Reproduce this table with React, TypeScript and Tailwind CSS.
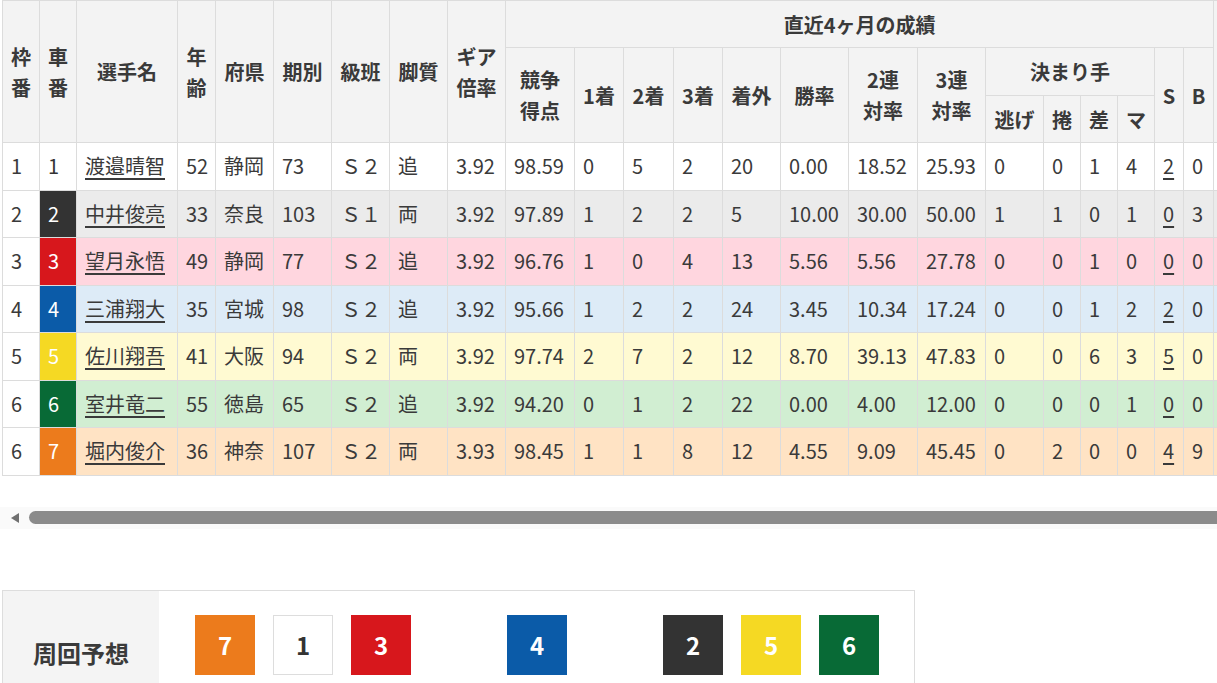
import React from "react";

type Row = {
  waku: number;
  car: number;
  name: string;
  age: number;
  pref: string;
  ki: number;
  cls: string;
  leg: string;
  gear: string;
  score: string;
  f1: number;
  f2: number;
  f3: number;
  out: number;
  win: string;
  r2: string;
  r3: string;
  nige: number;
  makuri: number;
  sashi: number;
  ma: number;
  s: number;
  b: number;
};

const rows: Row[] = [
  { waku: 1, car: 1, name: "渡邉晴智", age: 52, pref: "静岡", ki: 73, cls: "Ｓ２", leg: "追", gear: "3.92", score: "98.59", f1: 0, f2: 5, f3: 2, out: 20, win: "0.00", r2: "18.52", r3: "25.93", nige: 0, makuri: 0, sashi: 1, ma: 4, s: 2, b: 0 },
  { waku: 2, car: 2, name: "中井俊亮", age: 33, pref: "奈良", ki: 103, cls: "Ｓ１", leg: "両", gear: "3.92", score: "97.89", f1: 1, f2: 2, f3: 2, out: 5, win: "10.00", r2: "30.00", r3: "50.00", nige: 1, makuri: 1, sashi: 0, ma: 1, s: 0, b: 3 },
  { waku: 3, car: 3, name: "望月永悟", age: 49, pref: "静岡", ki: 77, cls: "Ｓ２", leg: "追", gear: "3.92", score: "96.76", f1: 1, f2: 0, f3: 4, out: 13, win: "5.56", r2: "5.56", r3: "27.78", nige: 0, makuri: 0, sashi: 1, ma: 0, s: 0, b: 0 },
  { waku: 4, car: 4, name: "三浦翔大", age: 35, pref: "宮城", ki: 98, cls: "Ｓ２", leg: "追", gear: "3.92", score: "95.66", f1: 1, f2: 2, f3: 2, out: 24, win: "3.45", r2: "10.34", r3: "17.24", nige: 0, makuri: 0, sashi: 1, ma: 2, s: 2, b: 0 },
  { waku: 5, car: 5, name: "佐川翔吾", age: 41, pref: "大阪", ki: 94, cls: "Ｓ２", leg: "両", gear: "3.92", score: "97.74", f1: 2, f2: 7, f3: 2, out: 12, win: "8.70", r2: "39.13", r3: "47.83", nige: 0, makuri: 0, sashi: 6, ma: 3, s: 5, b: 0 },
  { waku: 6, car: 6, name: "室井竜二", age: 55, pref: "徳島", ki: 65, cls: "Ｓ２", leg: "追", gear: "3.92", score: "94.20", f1: 0, f2: 1, f3: 2, out: 22, win: "0.00", r2: "4.00", r3: "12.00", nige: 0, makuri: 0, sashi: 0, ma: 1, s: 0, b: 0 },
  { waku: 6, car: 7, name: "堀内俊介", age: 36, pref: "神奈", ki: 107, cls: "Ｓ２", leg: "両", gear: "3.93", score: "98.45", f1: 1, f2: 1, f3: 8, out: 12, win: "4.55", r2: "9.09", r3: "45.45", nige: 0, makuri: 2, sashi: 0, ma: 0, s: 4, b: 9 },
];

const rowBg: Record<number, string> = {
  1: "bg-white",
  2: "bg-[#ebebeb]",
  3: "bg-[#ffd6df]",
  4: "bg-[#ddebf7]",
  5: "bg-[#fffad2]",
  6: "bg-[#d1eed2]",
  7: "bg-[#ffe3c4]",
};

const carBg: Record<number, string> = {
  1: "bg-white text-[#333333]",
  2: "bg-[#333333] text-white",
  3: "bg-[#d7171c] text-white",
  4: "bg-[#0b5ba8] text-white",
  5: "bg-[#f5d923] text-white",
  6: "bg-[#086a36] text-white",
  7: "bg-[#ec7b1c] text-white",
};

const colWidths = [37, 37, 101, 38, 58, 58, 58, 58, 58, 69, 49, 50, 49, 58, 68, 69, 68, 58, 37, 37, 37, 29, 30, 60];

const th = "border border-[#dcdcdc] bg-[#f3f3f3] font-bold text-center align-middle p-0 leading-[31px]";
const td = "border border-[#dcdcdc] px-2 py-0 text-left align-middle whitespace-nowrap";

function Box({ n, cls }: { n: number; cls: string }) {
  return (
    <div className={`w-[60px] h-[60px] flex items-center justify-center text-[24px] font-bold ${cls}`}>{n}</div>
  );
}

export default function App() {
  return (
    <div
      className="w-[1217px] h-[683px] overflow-hidden bg-white text-[#3a3a3a] text-[20px] leading-[30px]"
      style={{ fontFamily: '"Noto Sans CJK JP", "Noto Sans", sans-serif' }}
    >
      <div className="overflow-hidden pl-[2px]">
        <table className="table-fixed border-collapse w-[1271px]">
          <colgroup>
            {colWidths.map((w, i) => (
              <col key={i} style={{ width: w }} />
            ))}
          </colgroup>
          <thead>
            <tr className="h-[47px]">
              <th rowSpan={3} className={th}>枠<br />番</th>
              <th rowSpan={3} className={th}>車<br />番</th>
              <th rowSpan={3} className={th}>選手名</th>
              <th rowSpan={3} className={th}>年<br />齢</th>
              <th rowSpan={3} className={th}>府県</th>
              <th rowSpan={3} className={th}>期別</th>
              <th rowSpan={3} className={th}>級班</th>
              <th rowSpan={3} className={th}>脚質</th>
              <th rowSpan={3} className={th}>ギア<br />倍率</th>
              <th colSpan={14} className={th}>直近4ヶ月の成績</th>
              <th rowSpan={3} className={th}></th>
            </tr>
            <tr className="h-[48px]">
              <th rowSpan={2} className={th}>競争<br />得点</th>
              <th rowSpan={2} className={th}>1着</th>
              <th rowSpan={2} className={th}>2着</th>
              <th rowSpan={2} className={th}>3着</th>
              <th rowSpan={2} className={th}>着外</th>
              <th rowSpan={2} className={th}>勝率</th>
              <th rowSpan={2} className={th}>2連<br />対率</th>
              <th rowSpan={2} className={th}>3連<br />対率</th>
              <th colSpan={4} className={th}>決まり手</th>
              <th rowSpan={2} className={th}>S</th>
              <th rowSpan={2} className={th}>B</th>
            </tr>
            <tr className="h-[47px]">
              <th className={th}>逃げ</th>
              <th className={th}>捲</th>
              <th className={th}>差</th>
              <th className={th}>マ</th>
            </tr>
          </thead>
          <tbody>
            {rows.map((r) => (
              <tr key={r.car} className={`h-[47.5px] ${rowBg[r.car]}`}>
                <td className={`${td} bg-white`}>{r.waku}</td>
                <td className={`${td} ${carBg[r.car]}`}>{r.car}</td>
                <td className={td}>
                  <span className="underline decoration-[1.5px] underline-offset-[4px]">{r.name}</span>
                </td>
                <td className={td}>{r.age}</td>
                <td className={td}>{r.pref}</td>
                <td className={td}>{r.ki}</td>
                <td className={`${td} pl-[9px]`}>{r.cls}</td>
                <td className={td}>{r.leg}</td>
                <td className={td}>{r.gear}</td>
                <td className={td}>{r.score}</td>
                <td className={td}>{r.f1}</td>
                <td className={td}>{r.f2}</td>
                <td className={td}>{r.f3}</td>
                <td className={td}>{r.out}</td>
                <td className={td}>{r.win}</td>
                <td className={td}>{r.r2}</td>
                <td className={td}>{r.r3}</td>
                <td className={td}>{r.nige}</td>
                <td className={td}>{r.makuri}</td>
                <td className={td}>{r.sashi}</td>
                <td className={td}>{r.ma}</td>
                <td className={td}>
                  <span className="underline decoration-[1.5px] underline-offset-[4px]">{r.s}</span>
                </td>
                <td className={td}>{r.b}</td>
                <td className={td}></td>
              </tr>
            ))}
          </tbody>
        </table>
      </div>

      {/* fake horizontal scrollbar */}
      <div className="mt-[31px] h-[22px] bg-[#fafafa] flex items-center">
        <div className="ml-[11px] w-0 h-0 border-y-[5px] border-y-transparent border-r-[8px] border-r-[#707070]" />
        <div className="ml-[10px] flex-1 h-[13px] rounded-l-[7px] bg-[#8b8b8b]" />
      </div>

      {/* lap prediction */}
      <div className="mt-[61px] ml-[2px] w-[913px] h-[126px] border border-[#dddddd] flex">
        <div className="w-[156px] bg-[#f4f4f4] flex items-center justify-center font-bold text-[24px]">
          周回予想
        </div>
        <div className="flex gap-[18px] pl-[36px] pt-[24px]">
          <Box n={7} cls="bg-[#ec7b1c] text-white" />
          <Box n={1} cls="bg-white border border-[#dddddd] text-[#333333]" />
          <Box n={3} cls="bg-[#d7171c] text-white" />
          <div className="w-[60px] h-[60px]" />
          <Box n={4} cls="bg-[#0b5ba8] text-white" />
          <div className="w-[60px] h-[60px]" />
          <Box n={2} cls="bg-[#333333] text-white" />
          <Box n={5} cls="bg-[#f5d923] text-white" />
          <Box n={6} cls="bg-[#086a36] text-white" />
        </div>
      </div>
    </div>
  );
}
